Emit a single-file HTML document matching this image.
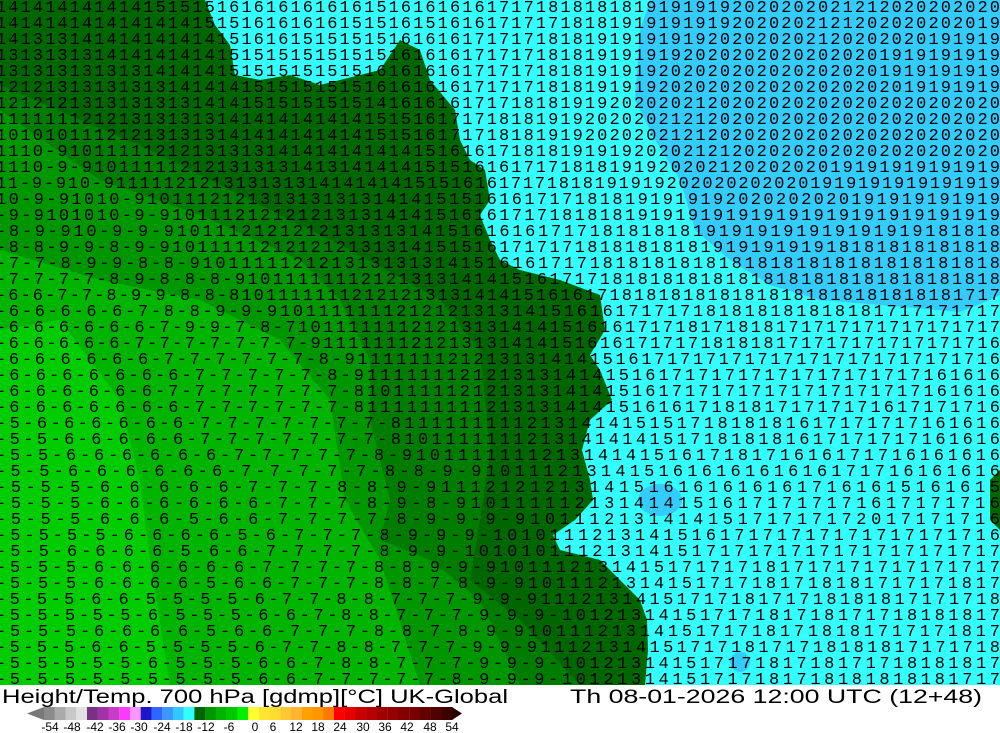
<!DOCTYPE html>
<html><head><meta charset="utf-8"><style>
html,body{margin:0;padding:0;background:#fff;}
svg{display:block;}
</style></head><body>
<svg width="1000" height="733" viewBox="0 0 1000 733" xmlns="http://www.w3.org/2000/svg">
<defs><clipPath id="m"><rect x="0" y="0" width="1000" height="685"/></clipPath></defs>
<g clip-path="url(#m)">
<rect x="0" y="0" width="1000" height="685" fill="#00cc00"/>
<polygon fill="#00b400" points="0,330 60,320 120,400 140,480 150,560 170,685 1000,685 1000,0 0,0"/>
<polygon fill="#009600" points="0,250 100,280 200,300 280,340 330,400 345,500 380,560 420,685 1000,685 1000,0 0,0"/>
<polygon fill="#007d00" points="0,110 100,180 200,215 300,260 340,300 370,360 370,420 390,500 380,540 430,560 480,600 520,685 1000,685 1000,0 0,0"/>
<polygon fill="#006600" points="0,85 150,150 250,200 350,250 440,300 480,350 490,450 480,520 470,580 520,620 580,685 1000,685 1000,0 0,0"/>
<polygon fill="#33ffff" points="205,0 215,25 230,45 235,75 260,80 290,75 320,85 380,70 400,40 420,50 430,80 455,110 460,140 470,160 485,170 490,200 480,215 490,240 500,260 520,270 560,280 600,295 605,330 590,355 600,370 612,400 590,420 582,450 590,480 593,500 575,520 553,535 560,550 600,560 620,580 640,600 647,620 648,650 645,685 1000,685 1000,0"/>
<polygon fill="#33ccff" points="650,0 640,30 635,100 655,140 680,180 695,230 730,260 770,285 820,300 880,305 960,312 990,300 1000,295 1000,0"/>
<ellipse cx="660" cy="500" rx="22" ry="16" fill="#33ccff"/>
<ellipse cx="740" cy="662" rx="10" ry="10" fill="#33ccff"/>
<polygon fill="#006600" points="990,480 1000,470 1000,530 990,520"/>
<g font-family="Liberation Mono, monospace" font-size="17" fill="#000">
<text x="-4" y="12" textLength="1004" lengthAdjust="spacing">1414141414141515151616161616161516161616171718181818191919192020202021212020202020</text>
<text x="-4" y="28" textLength="1004" lengthAdjust="spacing">1414141414141414151516161616151516151616171717181819191919192020202121202020202019</text>
<text x="-4" y="44" textLength="1004" lengthAdjust="spacing">1413131414141414141516161515151516161617171718181919191919202020202120202020191919</text>
<text x="-4" y="60" textLength="1004" lengthAdjust="spacing">1313131314141414141515151515151516161617171718181919191920202020202020201919191919</text>
<text x="-4" y="76" textLength="1004" lengthAdjust="spacing">1313131313131414141515151515151616161617171718181919192020202020202020201919191919</text>
<text x="-4" y="92" textLength="1004" lengthAdjust="spacing">1212131313131314141415151515151616161617171718181919192020202020202020202019191919</text>
<text x="-4" y="108" textLength="1004" lengthAdjust="spacing">1212121313131313141415151515151416161617171818191920202021202020202020202020202020</text>
<text x="-4" y="124" textLength="1004" lengthAdjust="spacing">1111111212131313131414141414141515161717181819192020202121202020202020202020202020</text>
<text x="-4" y="140" textLength="1004" lengthAdjust="spacing">1010101112121313131414141414141515161717181819192020202121202020202020202020202020</text>
<text x="-4" y="156" textLength="1004" lengthAdjust="spacing">1110-91011111212131313141414141414151616171818191919202021212020202020202020202020</text>
<text x="-4" y="172" textLength="1004" lengthAdjust="spacing">1110-9-910111112121313131413141414151516161717181819192020212020202019191919191919</text>
<text x="-4" y="188" textLength="1004" lengthAdjust="spacing">11-9-910-911111212131313131414141415151616171718181919192020202020201919191919191919</text>
<text x="-4" y="204" textLength="1004" lengthAdjust="spacing">10-9-91010-910111212131313131314141515161617171818191919192020202020191919191919</text>
<text x="-4" y="220" textLength="1004" lengthAdjust="spacing">-9-9101010-9-9101112121212131314141516161717181818191919191919191919191919191919</text>
<text x="-4" y="236" textLength="1004" lengthAdjust="spacing">-8-9-910-9-9-91011121212121313131415161616171718181818191919191919191919181818</text>
<text x="-4" y="252" textLength="1004" lengthAdjust="spacing">-8-8-9-9-8-9-9101111121212121313141515161717171818181818191919191918181818181818</text>
<text x="-4" y="268" textLength="1004" lengthAdjust="spacing">-7-7-8-9-9-8-8-910111112121313131314151616171718181818181818181818181818181818</text>
<text x="-4" y="284" textLength="1004" lengthAdjust="spacing">-7-7-7-7-8-9-8-8-8-9101111111212131314141516171718181818181818181818181818181818</text>
<text x="-4" y="300" textLength="1004" lengthAdjust="spacing">-6-6-7-7-8-9-9-8-8-810111111121212131314141516161718181818181818181818181818181717</text>
<text x="-4" y="316" textLength="1004" lengthAdjust="spacing">-6-6-6-6-6-7-8-8-9-9-910111111121212131314151616171717181818181818181717171717</text>
<text x="-4" y="332" textLength="1004" lengthAdjust="spacing">-6-6-6-6-6-6-7-9-9-7-8-710111111121213131414151616171718171818171717171717171717</text>
<text x="-4" y="348" textLength="1004" lengthAdjust="spacing">-6-6-6-6-6-7-7-7-7-7-7-7-9111111121213131414151616171717181818171717171717171716</text>
<text x="-4" y="364" textLength="1004" lengthAdjust="spacing">-6-6-6-6-6-6-7-7-7-7-7-7-8-911111112121313141415161717171717171717171717171716</text>
<text x="-4" y="380" textLength="1004" lengthAdjust="spacing">-6-6-6-6-6-6-6-7-7-7-7-7-8-9111111121213131414151617171717171717171717161616</text>
<text x="-4" y="396" textLength="1004" lengthAdjust="spacing">-6-6-6-6-6-6-7-7-7-7-7-7-7-8101111121213131414151617171717171717171717161616</text>
<text x="-4" y="412" textLength="1004" lengthAdjust="spacing">-6-6-6-6-6-6-6-7-7-7-7-7-7-8111111111213131414151616171818171717171617171716</text>
<text x="-4" y="428" textLength="1004" lengthAdjust="spacing">-5-6-6-6-6-6-6-7-7-7-7-7-7-7-811111111121314141515171818181617171717161616</text>
<text x="-4" y="444" textLength="1004" lengthAdjust="spacing">-5-5-6-6-6-6-6-7-7-7-7-7-7-7-810111111121314141415171818181617171717161616</text>
<text x="-4" y="460" textLength="1004" lengthAdjust="spacing">-5-5-6-6-6-6-6-6-7-7-7-7-7-8-9101111111213141415161718171616171716161616</text>
<text x="-4" y="476" textLength="1004" lengthAdjust="spacing">-5-5-6-6-6-6-6-6-7-7-7-7-7-8-8-9-9101112131415161616161616171716161616</text>
<text x="-4" y="492" textLength="1004" lengthAdjust="spacing">-5-5-5-6-6-6-6-6-7-7-7-8-8-9-911121212131415161616161617161615161615</text>
<text x="-4" y="508" textLength="1004" lengthAdjust="spacing">-5-5-5-6-6-6-6-6-6-7-7-7-8-9-8-9101111121314141516171717171617171716</text>
<text x="-4" y="524" textLength="1004" lengthAdjust="spacing">-5-5-5-6-6-6-5-6-6-7-7-7-7-8-9-9-9-910111213141415171717172017171716</text>
<text x="-4" y="540" textLength="1004" lengthAdjust="spacing">-5-5-5-5-6-6-6-6-5-6-7-7-7-8-9-9-9-101011121314151617171717171717171716</text>
<text x="-4" y="556" textLength="1004" lengthAdjust="spacing">-5-5-6-6-6-6-5-6-6-7-7-7-7-8-9-9-10101011121314151717171717171717171717</text>
<text x="-4" y="572" textLength="1004" lengthAdjust="spacing">-5-5-5-6-6-6-6-6-6-7-7-7-7-8-8-9-9-9101112131415171717181717171717171717</text>
<text x="-4" y="588" textLength="1004" lengthAdjust="spacing">-5-5-5-6-6-6-6-5-6-6-7-7-7-8-8-7-8-9-91011121314151717181718181717171817</text>
<text x="-4" y="604" textLength="1004" lengthAdjust="spacing">-5-5-5-6-6-5-5-5-5-6-7-7-8-8-7-7-7-9-9-91112131415171718171718181817171718</text>
<text x="-4" y="620" textLength="1004" lengthAdjust="spacing">-5-5-5-5-5-6-5-5-5-6-6-7-8-8-7-7-7-9-9-9-10121314151717181718171718181817</text>
<text x="-4" y="636" textLength="1004" lengthAdjust="spacing">-5-5-5-6-6-6-6-5-6-6-7-7-7-8-8-7-8-9-91011121314151717181718181717171817</text>
<text x="-4" y="652" textLength="1004" lengthAdjust="spacing">-5-5-5-6-6-5-5-5-5-6-7-7-8-8-7-7-7-9-9-91112131415171718171718181817171718</text>
<text x="-4" y="668" textLength="1004" lengthAdjust="spacing">-5-5-5-5-5-6-5-5-5-6-6-7-8-8-7-7-7-9-9-9-10121314151717181718171718181817</text>
<text x="-4" y="684" textLength="1004" lengthAdjust="spacing">-5-5-5-5-5-5-5-5-5-6-6-7-7-7-7-7-8-9-9-9-10121314151717181718181818181717</text>
</g>
</g>
<g font-family="Liberation Sans, sans-serif" fill="#000">
<text x="2" y="703" font-size="19" textLength="506" lengthAdjust="spacingAndGlyphs">Height/Temp. 700 hPa [gdmp][°C] UK-Global</text>
<text x="570" y="703" font-size="19" textLength="412" lengthAdjust="spacingAndGlyphs">Th 08-01-2026 12:00 UTC (12+48)</text>
</g>
<polygon points="27,713.5 44,707 44,720" fill="#787878"/>
<polygon points="452,707 462,713.5 452,720" fill="#280000"/>
<g>
<rect x="44.0" y="707" width="10.9" height="13" fill="#8c8c8c"/>
<rect x="54.7" y="707" width="10.9" height="13" fill="#aaaaaa"/>
<rect x="65.5" y="707" width="10.9" height="13" fill="#c8c8c8"/>
<rect x="76.2" y="707" width="10.9" height="13" fill="#e1e1e1"/>
<rect x="87.0" y="707" width="10.9" height="13" fill="#783282"/>
<rect x="97.7" y="707" width="10.9" height="13" fill="#a032aa"/>
<rect x="108.4" y="707" width="10.9" height="13" fill="#c83cc8"/>
<rect x="119.2" y="707" width="10.9" height="13" fill="#fa3cfa"/>
<rect x="129.9" y="707" width="10.9" height="13" fill="#ff96ff"/>
<rect x="140.7" y="707" width="10.9" height="13" fill="#1e14c8"/>
<rect x="151.4" y="707" width="10.9" height="13" fill="#3264ff"/>
<rect x="162.1" y="707" width="10.9" height="13" fill="#3c96ff"/>
<rect x="172.9" y="707" width="10.9" height="13" fill="#32c8ff"/>
<rect x="183.6" y="707" width="10.9" height="13" fill="#32ffff"/>
<rect x="194.4" y="707" width="10.9" height="13" fill="#006400"/>
<rect x="205.1" y="707" width="10.9" height="13" fill="#009600"/>
<rect x="215.8" y="707" width="10.9" height="13" fill="#00b400"/>
<rect x="226.6" y="707" width="10.9" height="13" fill="#00c800"/>
<rect x="237.3" y="707" width="10.9" height="13" fill="#00f000"/>
<rect x="248.1" y="707" width="10.9" height="13" fill="#ffff32"/>
<rect x="258.8" y="707" width="10.9" height="13" fill="#ffe632"/>
<rect x="269.5" y="707" width="10.9" height="13" fill="#ffdc32"/>
<rect x="280.3" y="707" width="10.9" height="13" fill="#ffc832"/>
<rect x="291.0" y="707" width="10.9" height="13" fill="#ffb432"/>
<rect x="301.8" y="707" width="10.9" height="13" fill="#ffa000"/>
<rect x="312.5" y="707" width="10.9" height="13" fill="#ff9600"/>
<rect x="323.2" y="707" width="10.9" height="13" fill="#ff7800"/>
<rect x="334.0" y="707" width="10.9" height="13" fill="#ff0000"/>
<rect x="344.7" y="707" width="10.9" height="13" fill="#e60000"/>
<rect x="355.5" y="707" width="10.9" height="13" fill="#c80000"/>
<rect x="366.2" y="707" width="10.9" height="13" fill="#b40000"/>
<rect x="376.9" y="707" width="10.9" height="13" fill="#a00000"/>
<rect x="387.7" y="707" width="10.9" height="13" fill="#960000"/>
<rect x="398.4" y="707" width="10.9" height="13" fill="#820000"/>
<rect x="409.2" y="707" width="10.9" height="13" fill="#780000"/>
<rect x="419.9" y="707" width="10.9" height="13" fill="#640000"/>
<rect x="430.6" y="707" width="10.9" height="13" fill="#500000"/>
<rect x="441.4" y="707" width="10.9" height="13" fill="#3c0000"/>
</g>
<g font-family="Liberation Sans, sans-serif" font-size="12" fill="#000" text-anchor="middle">
<text x="50" y="731">-54</text><text x="72" y="731">-48</text><text x="95" y="731">-42</text>
<text x="117" y="731">-36</text><text x="139" y="731">-30</text><text x="162" y="731">-24</text>
<text x="184" y="731">-18</text><text x="206" y="731">-12</text><text x="229" y="731">-6</text>
<text x="255" y="731">0</text><text x="273" y="731">6</text><text x="296" y="731">12</text>
<text x="318" y="731">18</text><text x="340" y="731">24</text><text x="363" y="731">30</text>
<text x="385" y="731">36</text><text x="407" y="731">42</text><text x="430" y="731">48</text>
<text x="452" y="731">54</text>
</g>
</svg>
</body></html>
